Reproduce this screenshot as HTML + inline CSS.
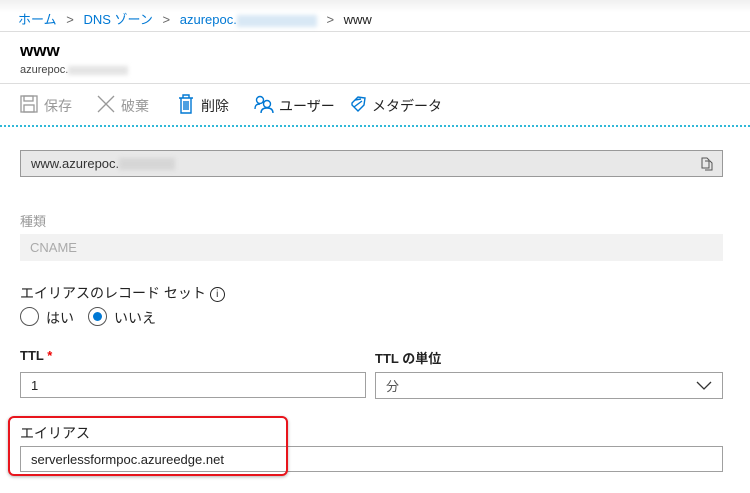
<!DOCTYPE html>
<html><head><meta charset="utf-8"><style>
body{margin:0;width:750px;height:493px;background:#fff;font-family:"Liberation Sans","Noto Sans CJK JP",sans-serif;position:relative;overflow:hidden;color:#222}
.a{position:absolute;white-space:nowrap}
.blue{color:#0078d4}
.inp{position:absolute;box-sizing:border-box;border:1px solid #a0a0a0;font-size:13px;padding-left:10px;display:flex;align-items:center}
.blur{display:inline-block;background:#dfe6ee;filter:blur(2px);height:12px;vertical-align:middle}
</style></head><body>
<div class="a" style="left:0;top:0;width:750px;height:31px;background:linear-gradient(#f0f0f0,#fff 40%);border-bottom:1px solid #ddd"></div>
<div class="a" style="left:18px;top:9px;font-size:13px"><span class="blue">ホーム</span> <span style="color:#666;margin:0 6px">&gt;</span> <span class="blue">DNS ゾーン</span> <span style="color:#666;margin:0 6px">&gt;</span> <span class="blue">azurepoc.</span><span class="blur" style="width:80px;background:#d8e8f5"></span> <span style="color:#666;margin:0 6px">&gt;</span> www</div>
<div class="a" style="left:20px;top:41px;font-size:17px;font-weight:bold;color:#000">www</div>
<div class="a" style="left:20px;top:64px;font-size:11px;color:#444">azurepoc.<span class="blur" style="width:60px;height:9px;background:#e4e4e4"></span></div>
<div class="a" style="left:0;top:83px;width:750px;border-top:1px solid #ddd"></div>
<svg class="a" style="left:20px;top:95px" width="18" height="18" viewBox="0 0 18 18" fill="none" stroke="#999" stroke-width="1.3"><rect x="1" y="1" width="16" height="16"/><rect x="4" y="1" width="9" height="5"/><rect x="4" y="10" width="10" height="7"/></svg>
<div class="a" style="left:44px;top:96px;font-size:14px;color:#999">保存</div>
<svg class="a" style="left:97px;top:95px" width="18" height="18" stroke="#999" stroke-width="1.3"><path d="M1 1L17 17M17 1L1 17"/></svg>
<div class="a" style="left:121px;top:96px;font-size:14px;color:#999">破棄</div>
<svg class="a" style="left:178px;top:94px" width="16" height="20" fill="none" stroke="#0078d4" stroke-width="1.4"><path d="M1 4H15M5 4V1H11V4M3 4V19H13V4M6 7V16M8 7V16M10 7V16"/></svg>
<div class="a" style="left:201px;top:96px;font-size:14px">削除</div>
<svg class="a" style="left:254px;top:95px" width="20" height="18" fill="none" stroke="#0078d4" stroke-width="1.4"><circle cx="6" cy="5" r="3.5"/><path d="M1 14C1 10 3 9 6 9"/><circle cx="13" cy="9" r="3.5"/><path d="M7 18C7 14 10 13 13 13C16 13 19 14 19 18"/></svg>
<div class="a" style="left:279px;top:96px;font-size:14px">ユーザー</div>
<svg class="a" style="left:349px;top:95px" width="18" height="18" fill="none" stroke="#0078d4" stroke-width="1.4"><path d="M3 8L9 2L16 3L15 10L9 16L3 10Z"/><path d="M6 5L12 4M5 12L13 6"/></svg>
<div class="a" style="left:372px;top:96px;font-size:14px">メタデータ</div>
<div class="a" style="left:0;top:125px;width:750px;border-top:2px dotted #30b8d8"></div>
<div class="inp" style="left:20px;top:150px;width:703px;height:27px;background:#e8e8e8;border-color:#999;color:#333">www.azurepoc.<span class="blur" style="width:56px;background:#d6d6d6"></span></div>
<svg class="a" style="left:701px;top:157px" width="12" height="14" fill="none" stroke="#555" stroke-width="1"><path d="M1 1H6L8 3V11H1Z M4 4H9L11 6V13H4"/></svg>
<div class="a" style="left:20px;top:211px;font-size:13px;color:#999">種類</div>
<div class="inp" style="left:20px;top:234px;width:703px;height:27px;background:#f2f2f2;border:none;color:#aaa">CNAME</div>
<div class="a" style="left:20px;top:283px;font-size:14px">エイリアスのレコード セット <span style="display:inline-block;width:13px;height:13px;border:1px solid #222;border-radius:50%;font-size:10px;text-align:center;line-height:13px;vertical-align:1px">i</span></div>
<div class="a" style="left:20px;top:307px;width:19px;height:19px;border:1px solid #555;border-radius:50%;box-sizing:border-box"></div>
<div class="a" style="left:46px;top:308px;font-size:14px">はい</div>
<div class="a" style="left:88px;top:307px;width:19px;height:19px;border:1px solid #555;border-radius:50%;box-sizing:border-box"></div>
<div class="a" style="left:93px;top:312px;width:9px;height:9px;background:#0078d4;border-radius:50%"></div>
<div class="a" style="left:114px;top:308px;font-size:14px">いいえ</div>
<div class="a" style="left:20px;top:348px;font-size:13px;font-weight:bold">TTL <span style="color:#e00">*</span></div>
<div class="inp" style="left:20px;top:372px;width:346px;height:26px">1</div>
<div class="a" style="left:375px;top:348px;font-size:13px;font-weight:bold">TTL の単位</div>
<div class="inp" style="left:375px;top:372px;width:348px;height:27px;color:#555">分</div>
<svg class="a" style="left:696px;top:381px" width="16" height="10" fill="none" stroke="#333" stroke-width="1.3"><path d="M1 1L8 8L15 1"/></svg>
<div class="a" style="left:20px;top:423px;font-size:14px">エイリアス</div>
<div class="inp" style="left:20px;top:446px;width:703px;height:26px;color:#222">serverlessformpoc.azureedge.net</div>
<div class="a" style="left:8px;top:416px;width:280px;height:60px;border:2px solid #e8141c;border-radius:6px;box-sizing:border-box;box-shadow:0 1px 3px rgba(0,0,0,.3)"></div>
</body></html>
